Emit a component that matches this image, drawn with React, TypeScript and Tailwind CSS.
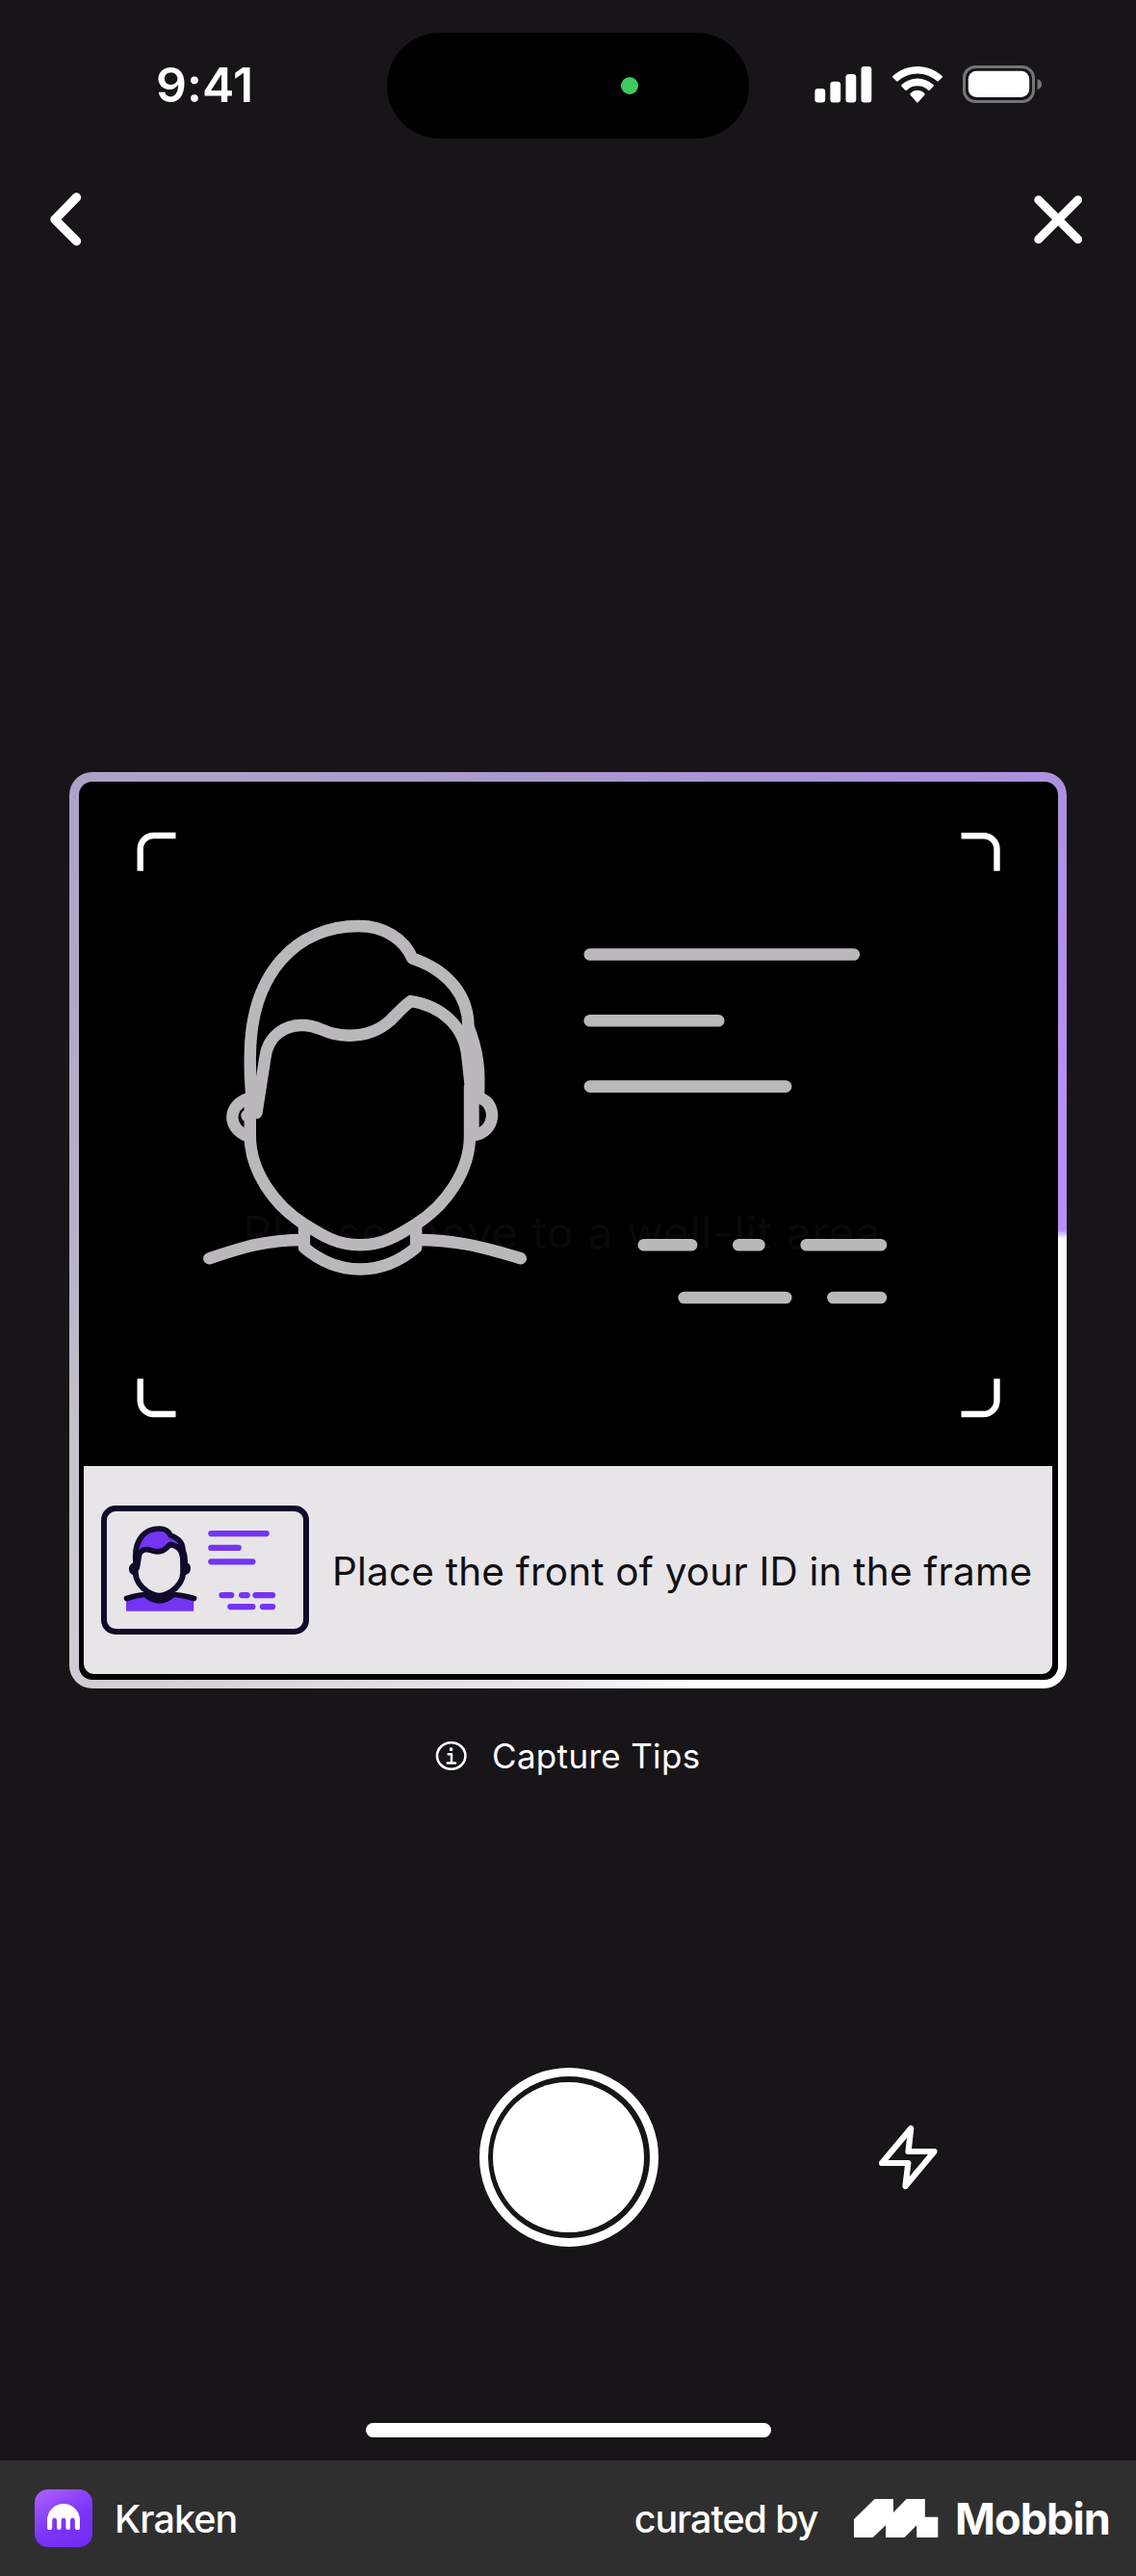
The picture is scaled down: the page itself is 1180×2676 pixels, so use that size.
const HAIR_OUTER =
  "M262 1150C260 1132 259 1116 259.3 1098C259.500 1010 308 962 372.5 962C398 962 419 975 428 995.7C467 1009 486 1036 486 1066.7";
const HAIR_INNER =
  "M266 1156L275 1098C278 1076 295 1065 313 1065C334 1065 336 1075.7 362.5 1075.7C380 1075.7 394 1070 405 1060C413 1052 419 1045 426.3 1040C458 1045 482 1066 485 1098L489 1135";
const HAIR_FILL =
  "M262 1130C258 1030 300 962 372.5 962C398 962 419 975 428 995.7C467 1009 486 1036 486 1080C478 1060 458 1045 426.8 1040C419 1045 413 1052 405 1060C394 1070 380 1075.7 362.5 1075.7C336 1075.7 334 1065 313 1065C295 1065 278 1076 275 1098Z";
const FACE =
  "M259.3 1140V1180C259.3 1217 285 1253 315.7 1271.7C335 1284 350 1293.3 373.6 1293.3C397 1293.3 412 1284 431.4 1271.7C462 1253 487.5 1217 487.5 1180V1130";
const NECK =
  "M315.5 1272V1296C351 1326 396 1326 431.7 1296V1272";
const SHOULDERS =
  "M216.8 1307.3C250 1296 275 1288 315 1288M432 1288C473 1288 500 1295 540.4 1307.3";
const EARS =
  "M258 1141C236 1148 235 1171 256 1180M499 1141C516 1147 515 1176 491 1179.5";
const TEMPLE = "M486 1066.7C496 1092 498 1112 496.4 1140";

function Portrait({ strokeWidth, color }: { strokeWidth: number; color: string }) {
  return (
    <g
      fill="none"
      stroke={color}
      strokeWidth={strokeWidth}
      strokeLinecap="round"
      strokeLinejoin="round"
    >
      <path d={HAIR_OUTER} />
      <path d={HAIR_INNER} />
      <path d={TEMPLE} />
      <path d={FACE} />
      <path d={NECK} strokeLinecap="butt" />
      <path d={SHOULDERS} />
      <path d={EARS} />
      <path d="M491 1130V1176" strokeLinecap="butt" />
      <path d="M256 1159H258" />
    </g>
  );
}

function Pill({ x, y, x2, h }: { x: number; y: number; x2: number; h: number }) {
  return <rect x={x} y={y} width={x2 - x} height={h} rx={h / 2} />;
}

function StatusBar() {
  return (
    <div className="relative flex h-[178px] shrink-0 items-start">
      <div className="w-[402px] pt-[57px] pl-[162px] text-[50px] leading-[62px] font-semibold tracking-[0.100px] text-white">
        9:41
      </div>
      <div className="mt-[34px] flex h-[110px] w-[376px] items-center rounded-full bg-black pl-[243px]">
        <div className="size-[18px] rounded-full bg-[#3ecb5d]" />
      </div>
      <div className="mt-[68px] ml-[68px] flex items-start text-white">
        <svg width="60" height="39" viewBox="0 0 60 39" fill="currentColor">
          <rect x="0.4" y="24" width="10.8" height="14.4" rx="3.2" />
          <rect x="16.4" y="16.8" width="10.8" height="21.6" rx="3.2" />
          <rect x="32.5" y="9" width="10.8" height="29.4" rx="3.2" />
          <rect x="48.5" y="1" width="10.8" height="37.4" rx="3.2" />
        </svg>
        <svg className="mt-px ml-[20.5px]" width="52" height="37.5" viewBox="0 0 17.14 12.33" preserveAspectRatio="none" fill="currentColor">
          <path d="M8.571 2.466c2.487 0 4.88.922 6.682 2.576.136.128.353.126.486-.004l1.298-1.263a.34.34 0 0 0-.003-.494c-4.731-4.375-12.195-4.375-16.926 0a.34.34 0 0 0-.003.494l1.298 1.263c.133.13.35.132.486.004a9.87 9.87 0 0 1 6.682-2.576Z" />
          <path d="M8.568 6.687a5.43 5.43 0 0 1 3.672 1.435c.136.131.35.129.483-.006l1.288-1.32a.37.37 0 0 0-.006-.518c-3.063-2.9-7.808-2.9-10.872 0a.37.37 0 0 0-.005.519l1.287 1.319c.133.135.347.137.483.006a5.44 5.44 0 0 1 3.67-1.435Z" />
          <path d="M11.092 9.48a.4.4 0 0 1-.102.28l-2.177 2.456a.32.32 0 0 1-.483 0L6.153 9.761a.4.4 0 0 1 .01-.556c1.39-1.393 3.426-1.393 4.816 0a.4.4 0 0 1 .113.275Z" />
        </svg>
        <svg className="ml-[21.500px]" width="84" height="39" viewBox="0 0 84 39">
          <rect x="1.5" y="1.5" width="72" height="36" rx="11.5" fill="none" stroke="#757477" strokeWidth="3" />
          <rect x="5.8" y="5.7" width="63.4" height="27.4" rx="8.5" fill="#fff" />
          <path d="M77.6 14c6 2 6 9.300 0 11.300z" fill="#757477" />
        </svg>
      </div>
    </div>
  );
}

function NavBar() {
  return (
    <div className="flex h-[100px] shrink-0 items-center justify-between pr-[52px] pl-[48px]">
      <svg width="40" height="60" viewBox="48 198 40 60" fill="none" stroke="#fff" strokeWidth="9.400" strokeLinecap="round" strokeLinejoin="round">
        <path d="M79.500 205L57 228l22.500 22.500" />
      </svg>
      <svg width="58" height="58" viewBox="1070 199 58 58" fill="none" stroke="#fff" strokeWidth="8.800" strokeLinecap="round">
        <path d="M1078.700 207.700l41 41M1119.700 207.700l-41 41" />
      </svg>
    </div>
  );
}

function Viewfinder() {
  return (
    <div className="relative h-[711px] overflow-hidden">
      <div className="absolute top-[438px] left-[-6px] w-full text-center text-[46px] leading-[60px] tracking-[0.900px] whitespace-nowrap text-[#0a080a]">
        Please move to a well-lit area
      </div>
      <svg className="relative block" width="1018" height="711" viewBox="81.500 812 1018 711">
        <g fill="none" stroke="#fff" strokeWidth="6.400">
          <path d="M145.200 904.700V882a14 14 0 0 1 14-14H182" />
          <path d="M998 868.200h23a14 14 0 0 1 14 14v22.500" />
          <path d="M145.200 1432.300v22.700a14 14 0 0 0 14 14H182" />
          <path d="M998 1469h23a14 14 0 0 0 14-14v-22.700" />
        </g>
        <Portrait strokeWidth={12.400} color="#bab8bb" />
        <g fill="#bab8bb">
          <Pill x={606} y={985.200} x2={892.600} h={12.600} />
          <Pill x={606} y={1053.900} x2={752} h={12.600} />
          <Pill x={606} y={1122.300} x2={822} h={12.600} />
          <Pill x={662.100} y={1287} x2={723.900} h={12.600} />
          <Pill x={760.500} y={1287} x2={794.200} h={12.600} />
          <Pill x={830.900} y={1287} x2={920.700} h={12.600} />
          <Pill x={703.900} y={1341.700} x2={822} h={12.600} />
          <Pill x={858.600} y={1341.700} x2={920.700} h={12.600} />
        </g>
      </svg>
    </div>
  );
}

function IdCardIcon() {
  return (
    <svg className="shrink-0" width="216" height="134" viewBox="105.200 1564 216 134">
      <rect x="108.200" y="1567" width="210" height="128" rx="12" fill="none" stroke="#110b2b" strokeWidth="6" />
      <path d="M131.200 1662C145 1656 188 1656 201.400 1662V1673.700H131.200Z" fill="#7434f3" />
      <g transform="matrix(.216 0 0 .21 85 1386)">
        <path d="M259.300 1140V1180C259.300 1220 280 1252 315.700 1271.700V1296C351 1326 396 1326 431.700 1296V1272C466 1252 487.500 1222 487.500 1180V1100L427 1040H300Z" fill="#e7e5e8" />
        <path d={HAIR_FILL} fill="#7434f3" />
        <path d="M315.700 1271.700C335 1284 350 1293.300 373.600 1293.300C397 1293.300 412 1284 431.400 1271.700V1296C396 1326 351 1326 315.700 1296Z" fill="#110b2b" />
        <Portrait strokeWidth={27} color="#110b2b" />
      </g>
      <g fill="#7434f3">
        <Pill x={216.400} y={1590} x2={280} h={6.200} />
        <Pill x={216.400} y={1604.800} x2={251} h={6.200} />
        <Pill x={216.400} y={1619.200} x2={265.700} h={6.200} />
        <Pill x={227.500} y={1654} x2={243.600} h={6.200} />
        <Pill x={248.200} y={1654} x2={260} h={6.200} />
        <Pill x={262.500} y={1654} x2={286.400} h={6.200} />
        <Pill x={236.400} y={1666} x2={265.700} h={6.200} />
        <Pill x={270} y={1666} x2={286.400} h={6.200} />
      </g>
    </svg>
  );
}

function CaptureCard() {
  return (
    <div className="mx-[72px] mt-[524px] h-[952px] shrink-0 rounded-[24px] bg-[conic-gradient(from_91deg,#fff_0deg,#fff_74deg,#e9e7ec_90deg,#dddbe1_116deg,#cfcdd3_137deg,#c6c4cb_154deg,#b9b5c8_172deg,#b3acc7_194deg,#ada1c8_223deg,#a899cc_266deg,#ab91e0_317deg,#b591f0_341deg,#b78ffb_359deg,#fff_360deg)] px-[9.500px] pt-[10px] pb-[9px]">
      <div className="flex h-full flex-col overflow-hidden rounded-[14px] bg-black">
        <Viewfinder />
        <div className="mx-[5.500px] flex h-[216px] items-center gap-[24px] rounded-b-[11px] bg-[#e7e5e8] pl-[18px]">
          <IdCardIcon />
          <div className="pt-[4px] text-[40.500px] leading-[50px] tracking-[0.200px] whitespace-nowrap text-[#111013]">
            Place the front of your ID in the frame
          </div>
        </div>
      </div>
    </div>
  );
}

function CaptureTips() {
  return (
    <div className="mt-[44px] flex h-[52px] shrink-0 items-center pl-[452px] text-white">
      <svg width="33" height="33" viewBox="0 0 33 33" fill="none" stroke="#fff" strokeWidth="2.500" strokeLinecap="round" strokeLinejoin="round">
        <ellipse cx="16.700" cy="16" rx="14.700" ry="13.800" />
        <path d="M13.700 14.300H17V23.500M12.800 23.500H21" />
        <circle cx="16.600" cy="9.200" r="1.100" fill="#fff" strokeWidth="1.500" />
      </svg>
      <div className="ml-[26px] text-[35px] leading-[44px] tracking-[0.320px] whitespace-nowrap">Capture Tips</div>
    </div>
  );
}

function CameraControls() {
  return (
    <div className="mt-[298px] flex h-[186px] shrink-0 items-center pl-[497.500px]">
      <div className="flex size-[186px] items-center justify-center rounded-full border-[9.300px] border-white">
        <div className="size-[156.500px] rounded-full bg-white" />
      </div>
      <svg className="ml-[227px]" width="66" height="72" viewBox="910.500 2205 66 72" fill="none" stroke="#fff" strokeWidth="6.200" strokeLinecap="round" strokeLinejoin="round">
        <path d="M945.700 2211L943 2235H970L940 2271L942.800 2247H915.500Z" />
      </svg>
    </div>
  );
}

function KrakenIcon() {
  return (
    <div className="flex size-[60px] items-center justify-center rounded-[14px] bg-[linear-gradient(150deg,#ae63fb_0%,#7b35f6_55%,#6f2cf4_100%)]">
      <svg width="60" height="60" viewBox="0 0 60 60" fill="#fff">
        <path d="M13 32a17 17 0 0 1 34 0v7.400a2.600 2.600 0 0 1-5.200 0V32.200a2.400 2.400 0 0 0-4.800 0v7.500a2.300 2.300 0 0 1-4.600 0V32.200a2.400 2.400 0 0 0-4.800 0v7.500a2.300 2.300 0 0 1-4.600 0V32.200a2.400 2.400 0 0 0-4.800 0v7.200a2.600 2.600 0 0 1-5.200 0Z" />
      </svg>
    </div>
  );
}

function Footer() {
  return (
    <div className="flex h-[120px] shrink-0 items-center bg-[#2f2f2f] pl-[36px] text-white">
      <KrakenIcon />
      <div className="ml-[23px] pt-[2px] text-[39.500px] leading-[50px] font-medium tracking-[-0.900px]">Kraken</div>
      <div className="mr-[38px] ml-auto pt-[2px] text-[39.500px] leading-[50px] font-medium tracking-[-1.100px] whitespace-nowrap">
        curated by
      </div>
      <svg width="88" height="40" viewBox="0 0 88 40" fill="#fff">
        <path d="M21.500 0H41V14L54.500 0H73.800V18.700H87.300V40H65.200V27.300L52.500 40H33V27.300L19.700 40H0V21Z" />
      </svg>
      <div className="mr-[27px] ml-[16.500px] pt-[1px] text-[45px] leading-[50px] font-bold tracking-[-0.900px]">Mobbin</div>
    </div>
  );
}

export default function App() {
  return (
    <div className="flex h-[2676px] w-[1180px] flex-col overflow-hidden bg-[#171518] font-['Inter',sans-serif]">
      <StatusBar />
      <NavBar />
      <CaptureCard />
      <CaptureTips />
      <CameraControls />
      <div className="mt-auto mb-[24px] ml-[380px] h-[15px] w-[421px] shrink-0 rounded-full bg-white" />
      <Footer />
    </div>
  );
}
